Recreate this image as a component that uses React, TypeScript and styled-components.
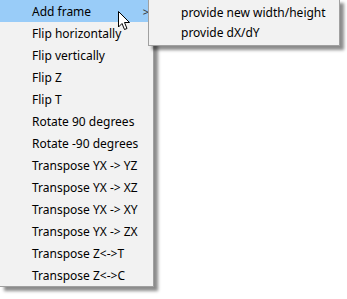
import { FC } from "react";
import styled, { createGlobalStyle } from "styled-components";

const GlobalStyle = createGlobalStyle`
  html, body {
    margin: 0;
    padding: 0;
    background: #ffffff;
  }
  body {
    font-family: "Segoe UI", "Noto Sans", "Open Sans", sans-serif;
    font-size: 12px;
    color: #000000;
  }
`;

const Stage = styled.div`
  position: relative;
  width: 347px;
  height: 299px;
  overflow: hidden;
`;

const Menu = styled.div`
  position: relative;
  width: 154px;
  box-sizing: border-box;
  display: flex;
  flex-direction: column;
  background: #f2f2f2;
  border-right: 1px solid #a0a0a0;
  border-bottom: 1px solid #a0a0a0;
  box-shadow: 4px 4px 3px rgba(0, 0, 0, 0.45);
`;

const Item = styled.div<{ $active?: boolean }>`
  position: relative;
  height: 22px;
  display: flex;
  align-items: center;
  padding-left: 32px;
  white-space: nowrap;
  background: ${({ $active }) => ($active ? "#99ccf8" : "transparent")};
`;

const Arrow = styled.span`
  position: absolute;
  right: 4px;
  top: 4px;
  font-size: 11px;
  color: #333;
`;

const SubMenu = styled.div`
  position: absolute;
  left: 148px;
  top: -1px;
  width: 192px;
  box-sizing: border-box;
  padding: 2px 0 3px;
  display: flex;
  flex-direction: column;
  background: #f2f2f2;
  border: 1px solid #a0a0a0;
  box-shadow: 4px 4px 3px rgba(0, 0, 0, 0.45);
`;

const SubItem = styled.div`
  height: 20px;
  display: flex;
  align-items: center;
  padding-left: 32px;
  white-space: nowrap;
`;

const Cursor = styled.svg`
  position: absolute;
  left: 118px;
  top: 11px;
`;

const items = [
  "Flip horizontally",
  "Flip vertically",
  "Flip Z",
  "Flip T",
  "Rotate 90 degrees",
  "Rotate -90 degrees",
  "Transpose YX -> YZ",
  "Transpose YX -> XZ",
  "Transpose YX -> XY",
  "Transpose YX -> ZX",
  "Transpose Z<->T",
  "Transpose Z<->C",
];

const App: FC = () => (
  <>
    <GlobalStyle />
    <Stage>
      <Menu>
        <Item $active>
          Add frame
          <Arrow>&gt;</Arrow>
        </Item>
        {items.map((label) => (
          <Item key={label}>{label}</Item>
        ))}
      </Menu>
      <SubMenu>
        <SubItem>provide new width/height</SubItem>
        <SubItem>provide dX/dY</SubItem>
      </SubMenu>
      <Cursor width="13" height="20" viewBox="0 0 13 20">
        <path
          d="M0.5 0.5 L0.5 16 L4 12.5 L6.5 18.5 L9 17.5 L6.5 11.5 L11.5 11.5 Z"
          fill="#ffffff"
          stroke="#000000"
          strokeWidth="1"
        />
      </Cursor>
    </Stage>
  </>
);

export default App;
